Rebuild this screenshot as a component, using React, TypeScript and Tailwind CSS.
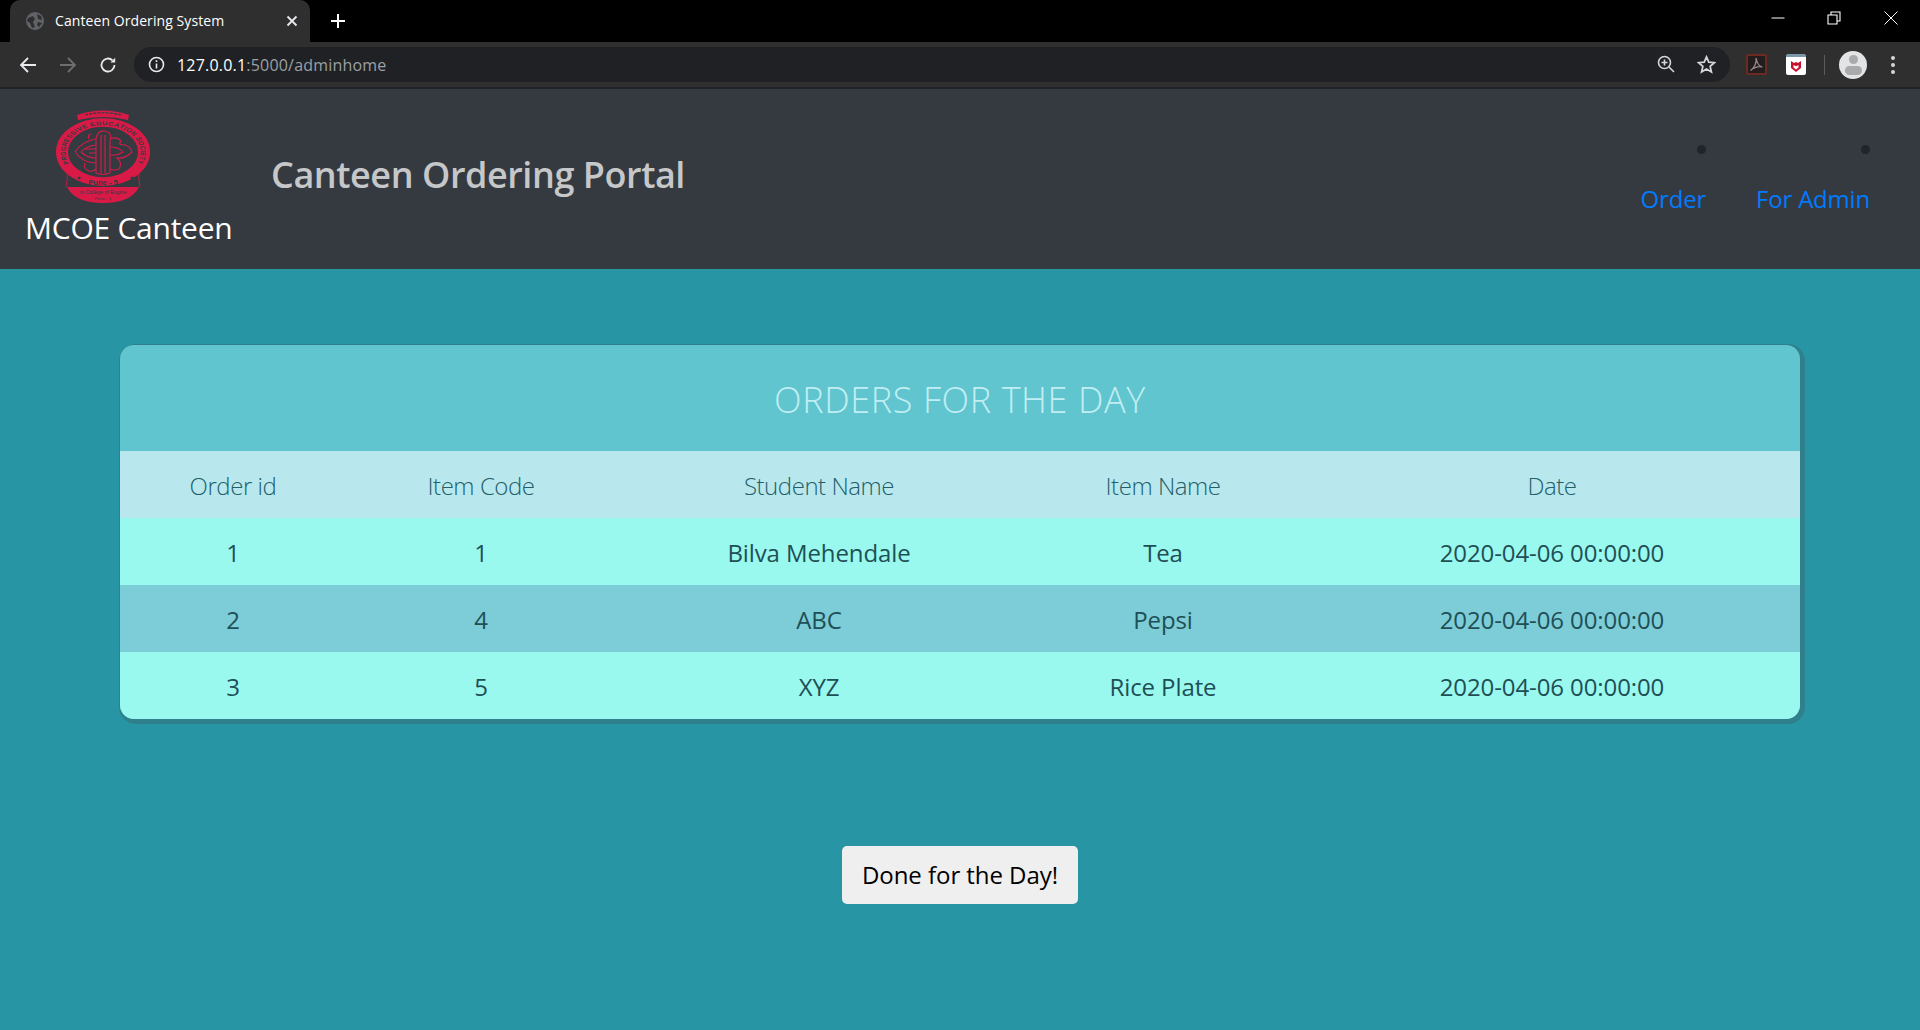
import React from "react";

const F = "font-['Open_Sans','Noto_Sans',sans-serif]";
const RED = "#d91a47";
const DARK = "#343a40";

function Logo() {
  return (
    <svg width="96" height="98" viewBox="0 0 96 98" className="block">
      <defs>
        <path id="ringText" d="M 14.5 65 A 37.5 37.5 0 1 1 81.5 65" />
      </defs>
      {/* top banner */}
      <path d="M 22 6 Q 48 -3 74 6 L 73 11 Q 48 5 23 11 Z" fill={RED} />
      <path d="M 30 6 Q 48 1.5 66 6" fill="none" stroke={DARK} strokeWidth="1.2" strokeDasharray="3 1.2" />
      {/* ring, squashed as in the picture */}
      <g transform="translate(48 43) scale(1 0.72) translate(-48 -48)">
        <circle cx="48" cy="48" r="41" fill="none" stroke={RED} strokeWidth="12" />
        <text fontSize="7.4" fontWeight="700" fill={DARK} fontFamily="'Liberation Sans',sans-serif" textAnchor="middle" letterSpacing="0.55">
          <textPath href="#ringText" startOffset="50%">PROGRESSIVE EDUCATION SOCIETY</textPath>
        </text>
      </g>
      <path d="M 12 60 Q 13 70 11 78 M 84 60 Q 83 70 85 78" fill="none" stroke={RED} strokeWidth="0.8" />
      <text x="48" y="75.5" fontSize="7.6" fontWeight="700" fill={DARK} fontFamily="'Liberation Sans',sans-serif" textAnchor="middle">Pune - 5</text>
      <text x="23" y="71" fontSize="6" fill={DARK} textAnchor="middle">★</text>
      <text x="76" y="71" fontSize="6" fill={DARK} textAnchor="middle">★</text>
      {/* lower segment */}
      <path d="M 12 78 H 84 Q 76 94 48 94 Q 20 94 12 78 Z" fill={RED} />
      <text x="48" y="84.5" fontSize="5.2" fill={DARK} fontFamily="'Liberation Sans',sans-serif" textAnchor="middle">m College of Engine</text>
      <text x="48" y="91" fontSize="4.4" fill={DARK} fontFamily="'Liberation Sans',sans-serif" textAnchor="middle">Pune - 5</text>
      {/* monogram */}
      <g fill="none" stroke={RED} strokeWidth="1.1">
        <path d="M 41 64 V 29 Q 43 21 50 22 Q 58 24 55 31 L 55 64 Q 48 67 41 64 Z" />
        <path d="M 46 64 V 26 M 50 64 V 26" />
        <path d="M 20 43 Q 26 33 40 30 M 20 43 Q 28 54 41 54" />
        <path d="M 26 43 Q 31 37 41 36 M 26 43 Q 32 49 41 49" />
        <path d="M 55 30 Q 62 27 66 32 Q 62 36 70 36 Q 76 38 77 43 Q 70 50 62 49 Q 68 54 64 60 Q 60 62 55 60" />
        <path d="M 55 38 Q 64 38 68 43 Q 62 47 55 46" />
        <path d="M 41 40 H 30 M 41 44 H 34 M 30 54 Q 28 60 34 62 Q 38 63 41 60 M 34 30 Q 32 26 36 25" />
      </g>
    </svg>
  );
}

function NavItem({ label }: { label: string }) {
  return (
    <div className="flex flex-col items-end">
      <div className="w-[9px] h-[9px] rounded-full bg-[#212529]" />
      <a className="mt-[27px] text-[24px] leading-[36px] text-[#007bff] tracking-[-0.2px]">{label}</a>
    </div>
  );
}

const rows = [
  ["1", "1", "Bilva Mehendale", "Tea", "2020-04-06 00:00:00"],
  ["2", "4", "ABC", "Pepsi", "2020-04-06 00:00:00"],
  ["3", "5", "XYZ", "Rice Plate", "2020-04-06 00:00:00"],
];
const widths = ["w-[226px]", "w-[270px]", "w-[406px]", "w-[282px]", "flex-1"];
const heads = ["Order id", "Item Code", "Student Name", "Item Name", "Date"];

export default function App() {
  return (
    <div className={`${F} w-[1920px] h-[1030px] overflow-hidden flex flex-col bg-[#2795a3]`}>
      {/* tab strip */}
      <div className="h-[42px] bg-black flex items-end shrink-0 relative">
        <div className="ml-[10px] w-[300px] h-[42px] bg-[#2f2f2f] rounded-t-[10px] flex items-center pl-[16px] pr-[12px] text-[14px] text-white">
          <svg width="18" height="18" viewBox="0 0 18 18" className="shrink-0">
            <circle cx="9" cy="9" r="9" fill="#5f6368" />
            <path d="M2 6 L7 4 L9 7 L7 10 L9 15 L6 16 L4 11 L1 9Z M11 2 L15 4 L16 8 L12 7Z M12 10 L16 11 L13 15 L11 13Z" fill="#2f2f2f" />
          </svg>
          <span className="ml-[11px] flex-1 -mt-[2px] tracking-[0.08px]">Canteen Ordering System</span>
          <svg width="12" height="12" viewBox="0 0 12 12" stroke="#e8eaed" strokeWidth="1.8"><path d="M1.5 1.5 L10.5 10.5 M10.5 1.5 L1.5 10.5" /></svg>
        </div>
        <svg width="16" height="16" viewBox="0 0 16 16" stroke="#fff" strokeWidth="2" className="ml-[20px] mb-[13px]"><path d="M8 1 V15 M1 8 H15" /></svg>
        <div className="ml-auto flex items-center h-full text-white">
          <svg width="14" height="14" viewBox="0 0 14 14" stroke="#fff" className="mb-[6px]"><path d="M0.5 7 H13.5" /></svg>
          <svg width="14" height="14" viewBox="0 0 14 14" fill="none" stroke="#fff" strokeWidth="1.1" className="ml-[42px] mb-[6px]"><path d="M1 4 H10 V13 H1 Z M4 4 V1 H13 V10 H10" /></svg>
          <svg width="14" height="14" viewBox="0 0 14 14" stroke="#fff" strokeWidth="1" className="ml-[43px] mr-[22px] mb-[6px]"><path d="M0.5 0.5 L13.5 13.5 M13.5 0.5 L0.5 13.5" /></svg>
        </div>
      </div>
      {/* toolbar */}
      <div className="h-[47px] shrink-0 bg-[#2f2f2f] border-b-2 border-[#222326] flex items-center">
        <svg width="18" height="18" viewBox="0 0 18 18" fill="none" stroke="#e8eaed" strokeWidth="1.8" className="ml-[19px]"><path d="M17 9 H2 M9 2 L2 9 L9 16" /></svg>
        <svg width="18" height="18" viewBox="0 0 18 18" fill="none" stroke="#6d6e70" strokeWidth="1.8" className="ml-[22px]"><path d="M1 9 H16 M9 2 L16 9 L9 16" /></svg>
        <svg width="18" height="18" viewBox="0 0 18 18" fill="none" stroke="#e8eaed" strokeWidth="1.8" className="ml-[22px]"><path d="M15.5 9 A6.5 6.5 0 1 1 13.5 4.3" /><path d="M16.2 1.8 V6.6 H11.4 Z" fill="#e8eaed" stroke="none" /></svg>
        <div className="ml-[17px] w-[1596px] h-[35px] rounded-full bg-[#202124] flex items-center pl-[14px] pr-[14px]">
          <svg width="17" height="17" viewBox="0 0 17 17" fill="none" stroke="#e8eaed" strokeWidth="1.6"><circle cx="8.5" cy="8.5" r="7" /><path d="M8.5 7.5 V12.5 M8.5 4.2 V6" /></svg>
          <span className="ml-[12px] text-[16px] tracking-[0.2px] text-white">127.0.0.1<span className="text-[#9aa0a6]">:5000/adminhome</span></span>
          <svg width="19" height="19" viewBox="0 0 19 19" fill="none" stroke="#d5d6d7" strokeWidth="1.6" className="ml-auto"><circle cx="7.5" cy="7.5" r="6" /><path d="M12 12 L17 17 M7.5 4.5 V10.5 M4.5 7.5 H10.5" /></svg>
          <svg width="19" height="19" viewBox="0 0 24 24" fill="none" stroke="#d5d6d7" strokeWidth="2.2" className="ml-[21px]"><path d="M12 2.5 L14.9 9 L22 9.7 L16.6 14.4 L18.2 21.4 L12 17.7 L5.8 21.4 L7.4 14.4 L2 9.7 L9.1 9 Z" /></svg>
        </div>
        <div className="ml-[16px] w-[21px] h-[21px] rounded-[2px] border-2 border-[#6b2a22] bg-[#241d1d] flex items-center justify-center">
          <svg width="15" height="15" viewBox="0 0 15 15" fill="none" stroke="#9a8d8b" strokeWidth="1.2"><path d="M7 1 C8 6 5 11 1.5 13.5 C5 10.5 10 9 13.5 10 C10 9.5 8 6 7 1Z" /></svg>
        </div>
        <div className="ml-[19px] w-[20px] h-[21px] rounded-[2px] bg-white border-t-[3px] border-t-[#7b98a8] flex items-center justify-center">
          <svg width="12" height="13" viewBox="0 0 12 13" fill="#c8102e"><path d="M1 1 L4 3 L6 2 L8 3 L11 1 V8 L6 12 L1 8Z M3.5 5 V7.6 L6 9.5 L8.5 7.6 V5 L6 6.2Z" fillRule="evenodd" /></svg>
        </div>
        <div className="ml-[18px] w-[1px] h-[20px] bg-[#5a5b5d]" />
        <div className="ml-[14px] w-[28px] h-[28px] rounded-full bg-[#e3e4e5] relative overflow-hidden">
          <div className="absolute left-[9.5px] top-[4px] w-[9px] h-[9px] rounded-full bg-[#a9aaab]" />
          <div className="absolute left-[5.5px] top-[15px] w-[17px] h-[9px] rounded-full bg-[#a9aaab]" />
        </div>
        <div className="ml-[24px] flex flex-col gap-[3px]">
          <div className="w-[4px] h-[4px] rounded-full bg-[#d5d6d7]" />
          <div className="w-[4px] h-[4px] rounded-full bg-[#d5d6d7]" />
          <div className="w-[4px] h-[4px] rounded-full bg-[#d5d6d7]" />
        </div>
      </div>
      {/* navbar */}
      <div className="h-[180px] shrink-0 bg-[#343a40] flex pl-[26px] pr-[50px]">
        <div className="w-[245px] shrink-0">
          <div className="ml-[29px] mt-[20px]"><Logo /></div>
          <div className="-mt-[2px] -ml-[1px] text-[30px] leading-[45px] text-white tracking-[-0.25px] whitespace-nowrap">MCOE Canteen</div>
        </div>
        <div className="text-[36px] leading-[54px] mt-[59px] font-semibold text-[#c5c7c9] tracking-[-0.44px] whitespace-nowrap">Canteen Ordering Portal</div>
        <div className="ml-auto flex gap-[50px] pt-[56px]">
          <NavItem label="Order" />
          <NavItem label="For Admin" />
        </div>
      </div>
      {/* main */}
      <div className="flex-1 flex flex-col items-center">
        <div className="mt-[76px] w-[1680px] rounded-[14px] overflow-hidden bg-[#60c5ce] shadow-[2px_2px_0_3px_#2f808c]">
          <div className="h-[106px] pt-[3px] flex items-center justify-center text-[36px] font-light text-[#c0eef3] tracking-[0.6px]">ORDERS FOR THE DAY</div>
          <div className="h-[67px] pt-[2px] bg-[#b8e8ee] flex items-center text-[24px] font-light text-[#245f69] tracking-[-0.45px]">
            {heads.map((h, i) => <div key={h} className={`${widths[i]} text-center`}>{h}</div>)}
          </div>
          {rows.map((r, ri) => (
            <div key={ri} className={`h-[67px] pt-[2px] flex items-center text-[24px] text-[#1f4f55] tracking-[-0.1px] ${ri === 1 ? "bg-[#7ccdd7]" : "bg-[#99f9ef]"}`}>
              {r.map((c, i) => <div key={i} className={`${widths[i]} text-center`}>{c}</div>)}
            </div>
          ))}
        </div>
        <button className="mt-[127px] w-[236px] h-[58px] rounded-[5px] bg-[#efefef] text-[24px] text-black tracking-[-0.05px]">Done for the Day!</button>
      </div>
    </div>
  );
}
